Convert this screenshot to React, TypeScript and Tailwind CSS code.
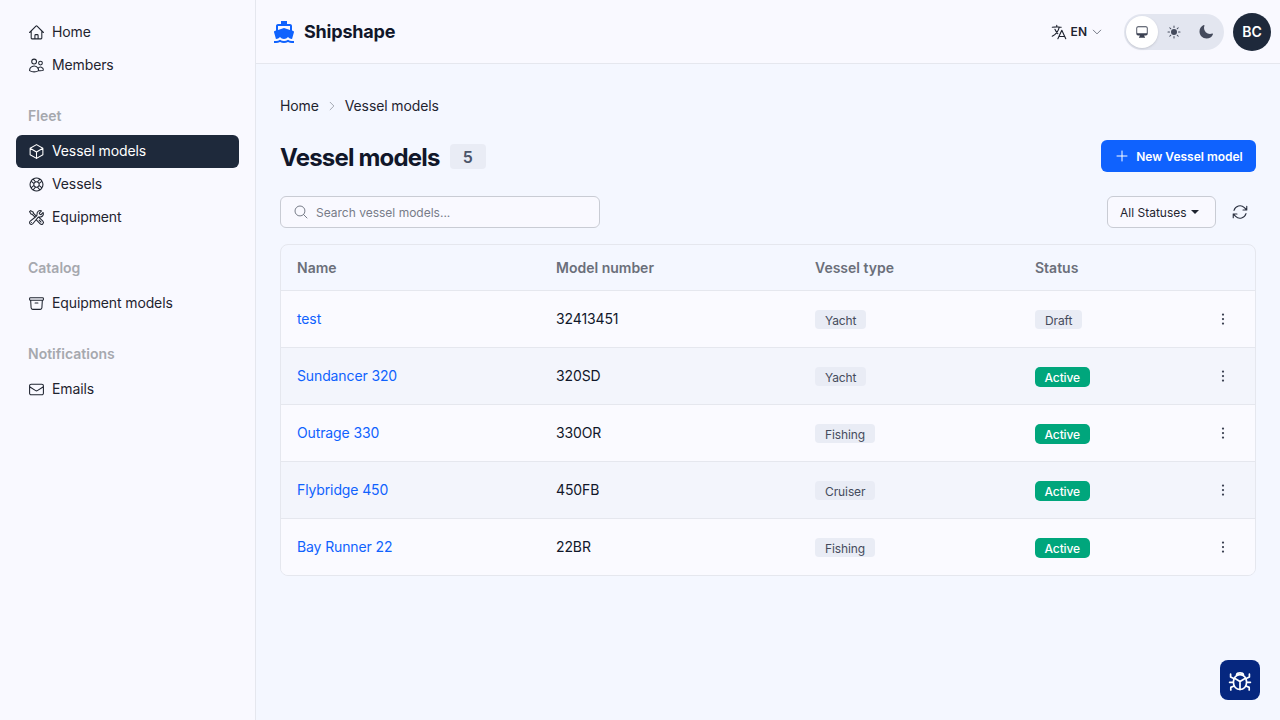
import React from "react";
import {
  HiOutlineHome, HiOutlineUsers, HiOutlineCube, HiOutlineLifebuoy, HiOutlineWrenchScrewdriver,
  HiOutlineArchiveBox, HiOutlineEnvelope, HiOutlineLanguage, HiOutlineChevronDown, HiComputerDesktop,
  HiSun, HiMoon, HiOutlinePlus, HiOutlineArrowPath, HiEllipsisVertical,
  HiOutlineMagnifyingGlass, HiOutlineChevronRight,
} from "react-icons/hi2";
import { MdDirectionsBoat } from "react-icons/md";

type Ico = React.ComponentType<{ className?: string }>;

function NavItem({ icon: Icon, label, active }: { icon: Ico; label: string; active?: boolean }) {
  return (
    <div className={"flex h-[33px] items-center gap-[7.5px] rounded-md pl-[11.5px] pr-3 text-[14px] leading-5 tracking-[-0.12px] " + (active ? "bg-[#1e293b] text-white" : "text-[#1f2430]")}>
      <Icon className="h-[17px] w-[17px] shrink-0" />
      <span className="pb-px">{label}</span>
    </div>
  );
}

function Group({ title, children }: { title?: string; children: React.ReactNode }) {
  return (
    <div className="flex flex-col">
      {title && <div className="mb-[9px] h-5 px-3 text-[14px] font-semibold leading-[20px] text-[#a6a8ae]">{title}</div>}
      {children}
    </div>
  );
}

function Tag({ children }: { children: React.ReactNode }) {
  return <span className="inline-flex h-[19px] items-center rounded-[4px] bg-[#e9ecf5] px-[10px] pt-[2px] text-[12px] tracking-[-0.1px] text-[#454b5c]">{children}</span>;
}

const rows = [
  { name: "test", num: "32413451", type: "Yacht", status: "Draft" },
  { name: "Sundancer 320", num: "320SD", type: "Yacht", status: "Active" },
  { name: "Outrage 330", num: "330OR", type: "Fishing", status: "Active" },
  { name: "Flybridge 450", num: "450FB", type: "Cruiser", status: "Active" },
  { name: "Bay Runner 22", num: "22BR", type: "Fishing", status: "Active" },
];

function Beetle({ className }: { className?: string }) {
  return (
    <svg viewBox="0 0 24 24" fill="none" stroke="currentColor" strokeWidth={1.7} strokeLinecap="round" strokeLinejoin="round" className={className}>
      <path d="M8.6 6.6C9.2 4.4 14.8 4.4 15.4 6.6" />
      <path d="M12 21.5c-3.8 0-6.6-3-6.6-7.4 0-4.3 2.8-7.4 6.6-7.4s6.6 3.1 6.6 7.4c0 4.4-2.8 7.4-6.6 7.4Z" />
      <path d="M12 21.5V13.5M12 13.5L6.6 10.2M12 13.5L17.4 10.2" />
      <path d="M5.8 10.5L2.6 9V6.2M5.2 14.3H1.6M6 18L2.8 19.4V22" />
      <path d="M18.2 10.5L21.4 9V6.2M18.8 14.3H22.4M18 18L21.2 19.4V22" />
    </svg>
  );
}

export default function App() {
  return (
    <div className="flex h-[720px] w-[1280px] overflow-hidden bg-[#f4f7ff] font-['Inter',sans-serif] text-[#11172a]">
      <aside className="flex h-full w-[256px] shrink-0 flex-col gap-6 border-r border-[#e5e7ee] bg-[#f9f9ff] pl-4 pr-4 pt-4">
        <Group>
          <NavItem icon={HiOutlineHome} label="Home" />
          <NavItem icon={HiOutlineUsers} label="Members" />
        </Group>
        <Group title="Fleet">
          <NavItem icon={HiOutlineCube} label="Vessel models" active />
          <NavItem icon={HiOutlineLifebuoy} label="Vessels" />
          <NavItem icon={HiOutlineWrenchScrewdriver} label="Equipment" />
        </Group>
        <Group title="Catalog">
          <NavItem icon={HiOutlineArchiveBox} label="Equipment models" />
        </Group>
        <Group title="Notifications">
          <NavItem icon={HiOutlineEnvelope} label="Emails" />
        </Group>
      </aside>

      <div className="flex min-w-0 flex-1 flex-col">
        <header className="flex h-[64px] shrink-0 items-center border-b border-[#e5e7ee] bg-[#f9f9ff] pl-4 pr-[9px]">
          <MdDirectionsBoat className="h-[24px] w-[24px] text-[#0f62fe]" />
          <span className="ml-[8px] text-[18px] font-bold tracking-[-0.2px] text-[#11172a]">Shipshape</span>
          <div className="ml-auto flex items-center">
            <HiOutlineLanguage className="h-[18px] w-[18px] text-[#1f2430]" />
            <span className="ml-[3px] text-[12px] font-semibold text-[#1f2430]">EN</span>
            <HiOutlineChevronDown className="ml-[4px] h-[12px] w-[12px] text-[#4b5160]" />
            <div className="ml-[21px] flex h-[36px] w-[100px] items-center rounded-full bg-[#e3e6f0]">
              <div className="ml-[2px] flex h-[32px] w-[32px] items-center justify-center rounded-full bg-white shadow-sm">
                <HiComputerDesktop className="h-[14px] w-[14px] text-[#3b4152]" />
              </div>
              <div className="flex h-[32px] w-[32px] items-center justify-center">
                <HiSun className="h-4 w-4 text-[#444a5c]" />
              </div>
              <div className="flex h-[32px] w-[32px] items-center justify-center">
                <HiMoon className="h-4 w-4 text-[#444a5c]" />
              </div>
            </div>
            <div className="ml-[9px] flex h-[38px] w-[38px] items-center justify-center rounded-full bg-[#1e293b] text-[14px] font-semibold text-white">BC</div>
          </div>
        </header>

        <main className="flex flex-1 flex-col px-6 pt-[32px]">
          <nav className="flex h-5 items-center text-[14px] tracking-[-0.12px] text-[#1f2430]">
            <span className="pb-[2px]">Home</span>
            <HiOutlineChevronRight className="mx-[7px] h-[12px] w-[12px] text-[#8a8e98]" />
            <span className="pb-[2px]">Vessel models</span>
          </nav>
          <div className="mt-[24px] flex items-center justify-between">
            <div className="flex items-center gap-[10px]">
              <h1 className="h-8 text-[24px] font-bold leading-[35px] tracking-[-0.8px]">Vessel models</h1>
              <span className="mt-px flex h-[25px] w-[36px] items-center justify-center rounded-[4px] bg-[#e9ecf5] text-[16px] font-semibold text-[#4b5469]">5</span>
            </div>
            <button className="flex h-[32px] w-[155px] items-center justify-center gap-[6px] rounded-md bg-[#0f62fe] text-[12px] font-semibold text-white">
              <HiOutlinePlus className="h-4 w-4" />
              <span className="pt-px">New Vessel model</span>
            </button>
          </div>
          <div className="mt-[24px] flex items-center justify-between">
            <div className="flex h-[32px] w-[320px] items-center rounded-md border border-[#c9ccd4] bg-[#f9f9ff] pl-3">
              <HiOutlineMagnifyingGlass className="h-4 w-4 text-[#777c88]" />
              <span className="ml-[7px] pt-px text-[12px] text-[#777c88]">Search vessel models...</span>
            </div>
            <div className="flex items-center">
              <button className="flex h-[32px] w-[109px] items-center justify-start rounded-md border border-[#c9ccd4] bg-[#f9f9ff] pl-3 text-[12px] text-[#1f2430]">
                <span className="pt-px">All Statuses</span>
                <span className="ml-[4px] h-0 w-0 border-x-[4px] border-t-[4px] border-x-transparent border-t-[#1f2430]" />
              </button>
              <div className="ml-[8px] flex h-[32px] w-[32px] items-center justify-center">
                <HiOutlineArrowPath className="h-[18px] w-[18px] text-[#2a3040]" />
              </div>
            </div>
          </div>

          <div className="mt-[16px] overflow-hidden rounded-lg border border-[#e5e7ee]">
            <div className="flex h-[46px] items-center border-b border-[#e5e7ee] text-[14px] font-semibold text-[#6b6f7a]">
              <div className="w-[259px] pl-4">Name</div>
              <div className="w-[259px] pl-4">Model number</div>
              <div className="w-[220px] pl-4">Vessel type</div>
              <div className="pl-4">Status</div>
            </div>
            {rows.map((r, i) => (
              <div key={r.name} className={"flex items-center text-[14px] tracking-[-0.12px] " + (i < rows.length - 1 ? "h-[57px] border-b border-[#e5e7ee] " : "h-[56px] ") + (i % 2 === 0 ? "bg-[#fafaff]" : "bg-[#f3f5fc]")}>
                <div className="w-[259px] pb-[2px] pl-4 text-[#0f62fe]">{r.name}</div>
                <div className="w-[259px] pb-[2px] pl-4 text-[#11172a]">{r.num}</div>
                <div className="flex w-[220px] items-center pl-4 pt-px"><Tag>{r.type}</Tag></div>
                <div className="flex w-[195px] items-center pl-4 pt-px">
                  {r.status === "Active" ? (
                    <span className="inline-flex h-[20px] items-center rounded-[5px] bg-[#00a67c] px-[9.5px] pt-[2px] text-[12px] font-medium tracking-[-0.1px] text-white">Active</span>
                  ) : (
                    <Tag>Draft</Tag>
                  )}
                </div>
                <HiEllipsisVertical className="h-[18px] w-[18px] text-[#3b4152]" />
              </div>
            ))}
          </div>
        </main>
      </div>

      <button className="fixed bottom-[20px] right-[20px] flex h-[40px] w-[40px] items-center justify-center rounded-lg bg-[#06277f]">
        <Beetle className="h-[24px] w-[24px] text-white" />
      </button>
    </div>
  );
}
